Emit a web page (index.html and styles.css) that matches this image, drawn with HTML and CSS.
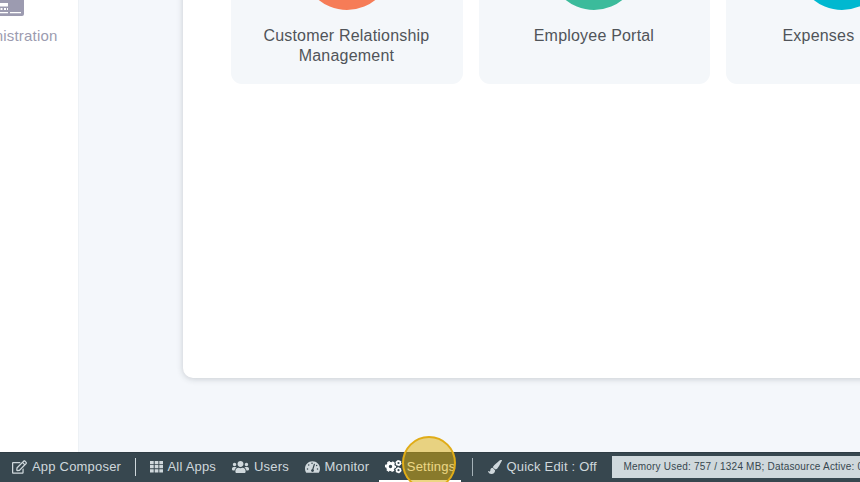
FILE: index.html
```
<!DOCTYPE html>
<html lang="en">
<head>
<meta charset="utf-8">
<title>App Center</title>
<link rel="stylesheet" href="styles.css">
</head>
<body>
<div class="workspace">
  <aside class="sidebar">
    <svg class="sidebar-icon" width="34" height="40" viewBox="0 0 34 40"><rect width="34" height="40" rx="2" fill="#9c9bb0"/><path d="M3 27h15v3.500H3z" fill="#fff"/><path d="M7 32h2v2H7zm3.500 0h2v2h-2zm3.500 0h2v2h-2zm3 0h1v2h-1zM3 36h15v1.200H3zm17 0h11v1.200H20z" fill="#fff"/></svg>
    <span class="sidebar-label">Administration</span>
  </aside>
  <main class="content">
    <section class="panel">
      <article class="app"><div class="disc disc-crm"></div><h2>Customer Relationship Management</h2></article>
      <article class="app"><div class="disc disc-portal"></div><h2>Employee Portal</h2></article>
      <article class="app"><div class="disc disc-expenses"></div><h2 class="leading">Expenses</h2></article>
    </section>
  </main>
</div>
<footer class="toolbar">
  <a class="tool composer"><svg width="15" height="14" viewBox="0 0 576 512"><path fill="currentColor" d="M402.3 344.9l32-32c5-5 13.700-1.500 13.700 5.700V464c0 26.500-21.500 48-48 48H48c-26.500 0-48-21.500-48-48V112c0-26.500 21.500-48 48-48h273.500c7.100 0 10.700 8.600 5.700 13.700l-32 32c-1.500 1.500-3.500 2.300-5.700 2.300H48v352h352V350.500c0-2.100.8-4.100 2.300-5.600zm156.600-201.800L296.300 405.700l-90.400 10c-26.200 2.900-48.500-19.200-45.600-45.600l10-90.400L432.900 17.100c22.900-22.900 59.900-22.900 82.700 0l43.200 43.200c22.900 22.900 22.900 60 .1 82.800zM460.100 174L402 115.900 216.200 301.800l-7.300 65.300 65.300-7.300L460.100 174zm64.800-79.700l-43.200-43.200c-4.100-4.100-10.800-4.100-14.800 0L436 82l58.100 58.100 30.900-30.900c4-4.200 4-10.800-.1-14.900z"/></svg><span>App Composer</span></a>
  <i class="divider"></i>
  <a class="tool apps"><svg width="13" height="13" viewBox="0 0 13 13"><path fill="currentColor" d="M0 1h3.700v3.200H0zm4.700 0h3.700v3.200H4.700zm4.600 0H13v3.200H9.300zM0 5.100h3.700v3.200H0zm4.700 0h3.700v3.200H4.700zm4.600 0H13v3.200H9.300zM0 9.200h3.700v3.200H0zm4.700 0h3.700v3.200H4.700zm4.600 0H13v3.200H9.300z"/></svg><span>All Apps</span></a>
  <a class="tool users"><svg width="17" height="14" viewBox="0 0 640 512"><path fill="currentColor" d="M96 224c35.300 0 64-28.700 64-64s-28.700-64-64-64-64 28.700-64 64 28.700 64 64 64zm448 0c35.300 0 64-28.700 64-64s-28.700-64-64-64-64 28.700-64 64 28.700 64 64 64zm32 32h-64c-17.600 0-33.500 7.100-45.100 18.600 40.300 22.100 68.900 62 75.100 109.400h66c17.700 0 32-14.300 32-32v-32c0-35.300-28.700-64-64-64zm-256 0c61.900 0 112-50.100 112-112S381.900 32 320 32 208 82.100 208 144s50.100 112 112 112zm76.800 32h-8.300c-20.800 10-43.900 16-68.500 16s-47.600-6-68.500-16h-8.300C179.600 288 128 339.600 128 403.200V432c0 26.500 21.500 48 48 48h288c26.500 0 48-21.500 48-48v-28.800c0-63.600-51.600-115.200-115.200-115.200zm-223.700-13.400C161.500 263.100 145.600 256 128 256H64c-35.300 0-64 28.700-64 64v32c0 17.700 14.300 32 32 32h65.900c6.300-47.400 34.900-87.300 75.200-109.400z"/></svg><span>Users</span></a>
  <a class="tool monitor"><svg width="15" height="14" viewBox="0 0 576 512"><path fill="currentColor" d="M288 32C128.900 32 0 160.900 0 320c0 52.800 14.200 102.300 39 144.800 5.600 9.600 16.300 15.200 27.400 15.200h443.200c11.100 0 21.800-5.600 27.400-15.200 24.800-42.500 39-92 39-144.800C576 160.900 447.100 32 288 32z"/><g fill="#37474f"><circle cx="270" cy="112" r="30"/><circle cx="142" cy="180" r="30"/><circle cx="96" cy="336" r="30"/><circle cx="480" cy="336" r="30"/><circle cx="448" cy="200" r="28"/></g><path d="M360 150L288 382" stroke="#37474f" stroke-width="44" stroke-linecap="round"/><circle cx="288" cy="394" r="54" fill="#37474f"/></svg><span>Monitor</span></a>
  <a class="tool settings"><svg width="17" height="14" viewBox="0 0 17 14"><g fill="none" stroke="currentColor"><circle cx="5.500" cy="6.500" r="3.100" stroke-width="2.800"/><circle cx="5.500" cy="6.500" r="4.800" stroke-width="1.600" stroke-dasharray="2.700 2.327" stroke-dashoffset="1.350"/><circle cx="13.500" cy="3" r="1.900" stroke-width="1.600"/><circle cx="13.500" cy="3" r="2.700" stroke-width=".8" stroke-dasharray="1.400 1.427"/><circle cx="13.500" cy="10.200" r="1.900" stroke-width="1.600"/><circle cx="13.500" cy="10.200" r="2.700" stroke-width=".8" stroke-dasharray="1.400 1.427"/></g></svg><span>Settings</span><i class="marker"></i></a>
  <i class="divider second"></i>
  <a class="tool edit"><svg width="14" height="14" viewBox="0 0 512 512"><path fill="currentColor" d="M168 281c-53 0-82 41-82 91 0 47-43 56-73 34-8-6-13-2-12 7 8 60 60 99 126 99 82 0 133-51 133-137zM460 1c-15 0-29 7-40 16C213 202 187 219 187 259c0 10 2 20 6 29l74 54c6 1 11 2 17 2 44 0 73-33 209-287 10-17 19-35 19-55 0-1-25-1-52-1z"/></svg><span>Quick Edit : Off</span></a>
  <div class="memory">Memory Used: 757 / 1324 MB; Datasource Active: 0</div>
</footer>
</body>
</html>
```
FILE: styles.css
```
* { box-sizing: border-box; }
body {
  margin: 0;
  width: 860px;
  height: 482px;
  overflow: hidden;
  font-family: "Liberation Sans", Arial, sans-serif;
  background: #f4f7fb;
}
.workspace { display: flex; height: 452px; overflow: hidden; }
.sidebar {
  flex: 0 0 79px;
  min-width: 0;
  overflow: hidden;
  display: flex;
  flex-direction: column;
  align-items: flex-end;
  background: #fff;
  border-right: 1px solid #edf1f5;
}
.sidebar-icon { margin: -24px 54px 0 0; flex: none; }
.sidebar-label {
  margin: 11px 20.500px 0 0;
  font-size: 15px;
  line-height: 18px;
  letter-spacing: .2px;
  color: #9c9bb0;
}
.content { flex: 1; min-width: 0; padding-left: 104px; overflow: hidden; }
.panel {
  display: flex;
  gap: 16px;
  width: 840px;
  height: 398px;
  margin-top: -20px;
  padding-left: 48.200px;
  background: #fff;
  border-radius: 10px;
  box-shadow: 0 1px 6px rgba(40, 50, 60, .22);
}
.app {
  flex: 0 0 231.500px;
  height: 104px;
  padding: 0 24px;
  display: flex;
  flex-direction: column;
  align-items: center;
  background: #f4f7fa;
  border-radius: 11px;
}
.disc { flex: none; width: 90px; height: 90px; margin-top: -60px; border-radius: 50%; }
.disc-crm { background: #f67c57; }
.disc-portal { background: #3bbb9b; }
.disc-expenses { background: #00b8d0; }
.app h2 {
  margin: 16px 1px 0 0;
  font-size: 16px;
  font-weight: 400;
  line-height: 20px;
  letter-spacing: .2px;
  text-align: center;
  color: #505459;
}
.app .leading { align-self: flex-start; margin-left: 32.300px; }
.toolbar {
  display: flex;
  align-items: center;
  height: 30px;
  padding-left: 12px;
  white-space: nowrap;
  background: #37474f;
  border-top: 1px solid #2f3d45;
  color: #cfd8dc;
}
.tool {
  position: relative;
  flex: none;
  display: flex;
  align-items: center;
  height: 29px;
  padding-bottom: 2px;
  font-size: 13px;
  letter-spacing: .2px;
}
.tool svg { flex: none; }
.composer { width: 123px; gap: 5px; }
.divider { flex: none; width: 1px; height: 18px; margin: 0 13.500px 1px 0; background: #cfd8dc; }
.apps { width: 82.500px; gap: 5px; }
.users { width: 73px; gap: 5px; }
.monitor { width: 74.300px; gap: 4.500px; }
.settings { width: 81.700px; gap: 4.500px; padding: 0 0 0 6px; border-bottom: 2px solid #fff; color: #fff; }
.divider.second { margin: 0 14.500px 1px 11.500px; background: #a5b2b8; }
.edit { width: 124.500px; gap: 4.500px; }
.marker {
  position: absolute;
  left: 23px;
  top: -17px;
  width: 54px;
  height: 54px;
  border: 2px solid #e0ac18;
  border-radius: 50%;
  background: rgba(220, 174, 8, .5);
}
.memory {
  flex: 1;
  min-width: 0;
  overflow: hidden;
  height: 22px;
  margin-bottom: 1px;
  padding-left: 11px;
  font-size: 10px;
  line-height: 22px;
  letter-spacing: .2px;
  background: #cfd8dc;
  color: #37474f;
}
```
